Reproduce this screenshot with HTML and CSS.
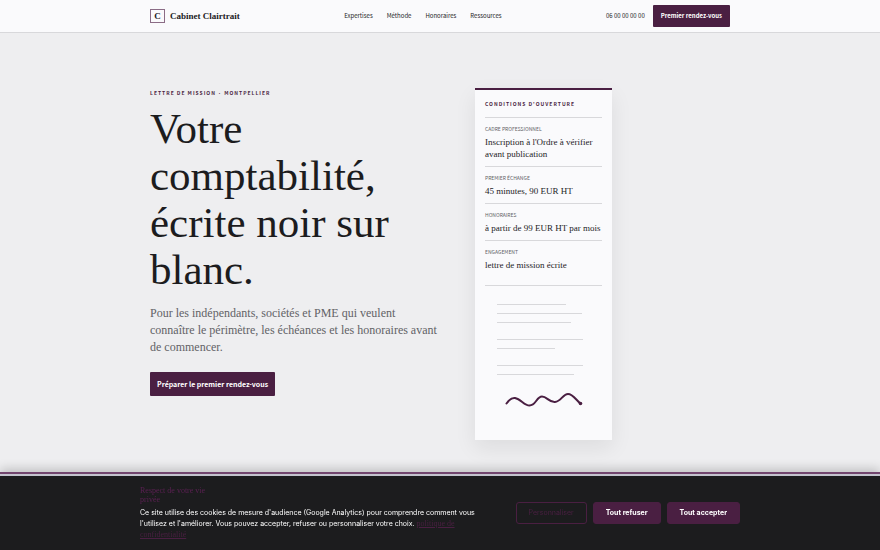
FILE: index.html
```html
<!DOCTYPE html>
<html lang="fr">
<head>
  <meta charset="UTF-8">
  <meta name="viewport" content="width=device-width, initial-scale=1.0">
  <title>Cabinet Clairtrait</title>
  <link rel="stylesheet" href="styles.css">
</head>
<body>
<header class="site-header">
  <div class="container header-inner">
    <a class="brand" href="#"><span class="brand-mark">C</span>Cabinet Clairtrait</a>
    <nav class="main-nav">
      <a href="#expertises">Expertises</a>
      <a href="#methode">Méthode</a>
      <a href="#honoraires">Honoraires</a>
      <a href="#ressources">Ressources</a>
    </nav>
    <div class="header-actions">
      <a class="phone" href="tel:0600000000">06 00 00 00 00</a>
      <a class="btn btn-small" href="#contact">Premier rendez-vous</a>
    </div>
  </div>
</header>

<main class="container hero">
  <div class="hero-text">
    <p class="eyebrow">Lettre de mission · Montpellier</p>
    <h1>Votre comptabilité, écrite noir sur blanc.</h1>
    <p class="lead">Pour les indépendants, sociétés et PME qui veulent<br> connaître le périmètre, les échéances et les honoraires avant<br> de commencer.</p>
    <a class="btn" href="#contact">Préparer le premier rendez-vous</a>
  </div>

  <aside class="letter">
    <h2>Conditions d'ouverture</h2>
    <dl>
      <div>
        <dt>Cadre professionnel</dt>
        <dd>Inscription à l'Ordre à vérifier avant publication</dd>
      </div>
      <div>
        <dt>Premier échange</dt>
        <dd>45 minutes, 90 EUR HT</dd>
      </div>
      <div>
        <dt>Honoraires</dt>
        <dd>à partir de 99 EUR HT par mois</dd>
      </div>
      <div>
        <dt>Engagement</dt>
        <dd>lettre de mission écrite</dd>
      </div>
    </dl>
    <svg class="signature" viewBox="0 0 117 144" aria-hidden="true">
      <path class="rule" d="M12 18.500H81M12 27.500H97M12 36.500H86M12 53.500H98M12 62.500H70M12 79.500H98M12 88.500H89"/>
      <path class="stroke" d="M21.500 117.500C24 114 26.500 111.500 30 112C36 113 39 119.500 44.500 119.500C51 119.500 51.500 110.500 57 110.500C62 110.500 64 116.500 70 116C76 115.500 78 108 83 108C88 108 91 114 95.500 117.500"/>
      <circle class="dot" cx="95.500" cy="117.500" r="1.800"/>
    </svg>
  </aside>
</main>

<section class="cookie-banner" aria-label="Cookies">
  <div class="cookie-inner">
    <div class="cookie-text">
      <h2>Respect de votre vie privée</h2>
      <p>Ce site utilise des cookies de mesure d'audience (Google Analytics) pour comprendre comment vous l'utilisez et l'améliorer. Vous pouvez accepter, refuser ou personnaliser votre choix. <a href="#confidentialite">politique de confidentialité</a></p>
    </div>
    <div class="cookie-actions">
      <button class="outline" type="button">Personnaliser</button>
      <button type="button">Tout refuser</button>
      <button type="button">Tout accepter</button>
    </div>
  </div>
</section>
</body>
</html>
```
FILE: styles.css
```css
* { box-sizing: border-box; }
body {
  margin: 0;
  min-height: 100vh;
  font-family: "Noto Sans CJK KR", "Noto Sans", sans-serif;
  background: #eeeef0;
  color: #1c1c1e;
}
a {
  color: inherit;
  text-decoration: none;
}
.container {
  width: calc(100% - 40px);
  max-width: 580px;
  margin: 0 auto;
}
.site-header {
  background: #fafafc;
  border-bottom: 1px solid #d8d8db;
}
.header-inner {
  display: flex;
  align-items: center;
  justify-content: space-between;
  min-height: 32px;
}
.brand {
  display: flex;
  align-items: center;
  gap: 5px;
  font: bold 9px/14px "Liberation Serif", serif;
}
.brand-mark {
  width: 15px;
  height: 14px;
  border: 1px solid #8b6c86;
  line-height: 13px;
  text-align: center;
}
.main-nav {
  display: flex;
  gap: 14px;
  font-size: 6px;
  line-height: 10px;
}
.header-actions {
  display: flex;
  align-items: center;
  gap: 8px;
}
.phone {
  font-size: 6px;
  line-height: 10px;
}
.btn {
  display: inline-block;
  padding: 7px;
  border-radius: 1px;
  background: #4a1f42;
  color: #fff;
  font-size: 7px;
  font-weight: bold;
  line-height: 10px;
}
.btn-small {
  padding: 6px 8px;
  font-size: 6px;
}
.hero {
  display: grid;
  grid-template-columns: 300fr 255fr;
  gap: 25px;
  align-items: start;
  padding: 55px 0 100px;
}
.eyebrow {
  margin: 0 0 7px;
  color: #4a1f42;
  font-size: 5px;
  font-weight: bold;
  line-height: 10px;
  letter-spacing: 1px;
  text-transform: uppercase;
}
h1 {
  max-width: 250px;
  margin: 0 0 12px;
  font: 43px/47px "Liberation Serif", serif;
}
.lead {
  margin: 0 0 12px;
  color: #626266;
  font: 12px/17px "Liberation Serif", serif;
}
.letter {
  width: 137px;
  padding: 9px 10px 10px;
  border-top: 2px solid #4a1f42;
  background: #fafafc;
  box-shadow: 0 8px 20px rgba(28, 28, 30, 0.08);
}
.letter h2 {
  margin: 0 0 8px;
  color: #4a1f42;
  font-size: 5px;
  line-height: 10px;
  letter-spacing: 1px;
  text-transform: uppercase;
}
dl {
  margin: 0;
  padding-bottom: 8px;
  border-bottom: 1px solid #d8d8db;
}
dl div {
  padding: 7px 0 6px;
  border-top: 1px solid #d8d8db;
}
dt {
  margin-bottom: 3px;
  color: #626266;
  font-size: 5px;
  line-height: 8px;
  text-transform: uppercase;
}
dd {
  margin: 0;
  font: 9px/12px "Liberation Serif", serif;
}
.signature {
  display: block;
  width: 100%;
}
.rule {
  fill: none;
  stroke: #d8d8db;
}
.stroke {
  fill: none;
  stroke: #4a1f42;
  stroke-width: 2;
  stroke-linecap: round;
}
.dot { fill: #4a1f42; }
.cookie-banner {
  position: fixed;
  right: 0;
  bottom: 0;
  left: 0;
  border-top: 2px solid #72456e;
  background: #1c1c1e;
  box-shadow: inset 0 2px #c4c3ce, 0 -3px 10px rgba(0, 0, 0, 0.2);
}
.cookie-inner {
  display: flex;
  align-items: center;
  justify-content: space-between;
  gap: 30px;
  width: calc(100% - 40px);
  max-width: 600px;
  margin: 0 auto;
  padding: 12px 0 10px;
}
.cookie-text {
  flex: 1;
  max-width: 340px;
}
.cookie-text h2 {
  max-width: 80px;
  margin: 0 0 3px;
  color: #5a2052;
  font: 8px/9px "Liberation Serif", serif;
}
.cookie-text p {
  margin: 0;
  color: #fff;
  font: 7px/11px Inter, sans-serif;
}
.cookie-text a {
  color: #4a1f42;
  font-family: "Liberation Serif", serif;
  font-size: 8px;
  line-height: 10px;
  text-decoration: underline;
}
.cookie-actions {
  display: flex;
  gap: 6px;
}
.cookie-actions button {
  padding: 5px 12px;
  border: 1px solid #4a1f42;
  border-radius: 3px;
  background: #4a1f42;
  color: #fff;
  font: bold 7px/10px Inter, sans-serif;
}
.cookie-actions .outline {
  background: transparent;
  color: #4a1f42;
  font-weight: normal;
}
@media (max-width: 600px) {
  .main-nav { display: none; }
  .hero { grid-template-columns: 1fr; }
  .cookie-inner { flex-direction: column; }
}
```
